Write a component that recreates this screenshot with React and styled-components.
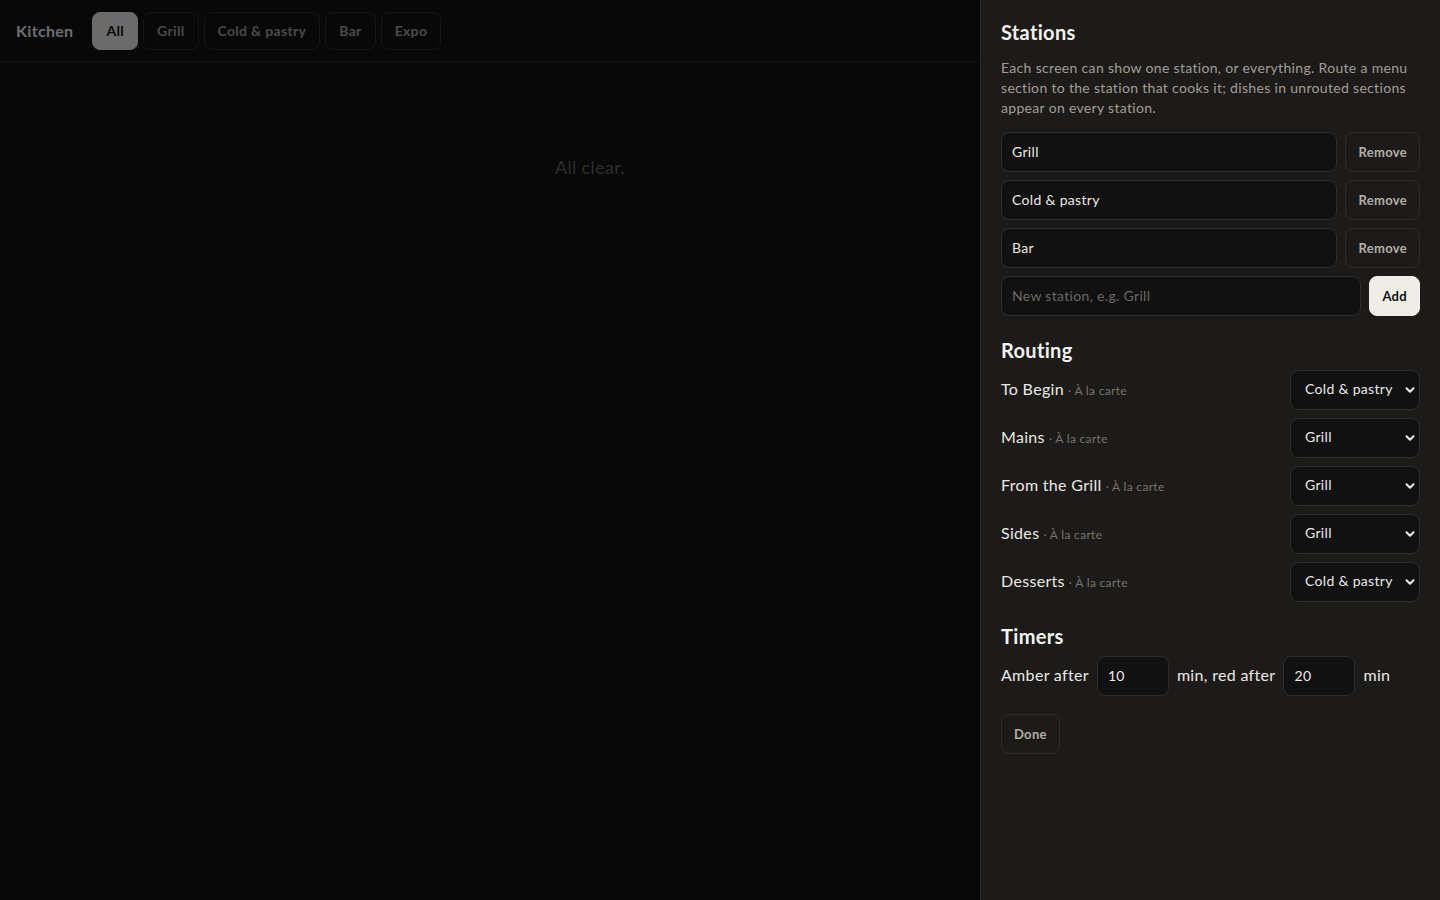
import React from 'react';
import styled, { createGlobalStyle } from 'styled-components';
import { ChevronDown } from 'lucide-react';

const GlobalStyle = createGlobalStyle`
  * { box-sizing: border-box; }
  body {
    margin: 0;
    background: #111;
    font-family: Lato, "Noto Sans", sans-serif;
    letter-spacing: 0.02em;
    color: #ece9e3;
  }
  input, select, button { letter-spacing: inherit; }
`;

// Kitchen board underneath the settings drawer
const Page = styled.div`
  position: relative;
  min-height: 100vh;
  background: #111;
`;

const Header = styled.header`
  display: flex;
  align-items: center;
  gap: 19px;
  height: 62px;
  padding: 0 16px;
  border-bottom: 1px solid #222;
`;

const Brand = styled.div`
  font-size: 16px;
  font-weight: 700;
  color: #dcdcdc;
`;

const Tabs = styled.nav`
  display: flex;
  gap: 5px;
`;

const Tab = styled.button`
  height: 38px;
  padding: 0 13px;
  border-radius: 8px;
  font-family: inherit;
  font-size: 14px;
  font-weight: 700;
  border: 1px solid ${(p) => (p.$active ? '#d6d6d6' : '#2a2a2a')};
  background: ${(p) => (p.$active ? '#d6d6d6' : 'transparent')};
  color: ${(p) => (p.$active ? '#111' : '#949494')};
`;

const Empty = styled.div`
  padding: 94px 260px 0 0;
  text-align: center;
  font-size: 18px;
  color: #5c5c5c;
`;

const Backdrop = styled.div`
  position: fixed;
  inset: 0;
  background: rgba(0, 0, 0, 0.5);
`;

// Settings drawer
const Drawer = styled.aside`
  position: fixed;
  top: 0;
  right: 0;
  bottom: 0;
  width: 460px;
  padding: 20px;
  background: #1c1b19;
  border-left: 1px solid #2b2a27;
  display: flex;
  flex-direction: column;
  gap: 22px;
`;

const Section = styled.section`
  display: flex;
  flex-direction: column;
  gap: 8px;
`;

const Heading = styled.h2`
  margin: 0;
  font-size: 20px;
  line-height: 24px;
  font-weight: 700;
  color: #f5f3ef;
`;

const Intro = styled.p`
  margin: 6px 0 6px;
  font-size: 14px;
  line-height: 20px;
  color: #a29e97;
`;

const Row = styled.div`
  display: flex;
  align-items: center;
  gap: 8px;
`;

const TextInput = styled.input`
  flex: ${(p) => (p.$width ? 'none' : 1)};
  width: ${(p) => (p.$width ? `${p.$width}px` : 'auto')};
  min-width: 0;
  height: 40px;
  padding: 0 10px 2px;
  border-radius: 8px;
  border: 1px solid #2e2c29;
  background: #111;
  color: #ece9e3;
  font-family: inherit;
  font-size: 14px;
  outline: none;

  &::placeholder {
    color: #6c6862;
  }
`;

const Button = styled.button`
  height: 40px;
  padding: 0 12px;
  border-radius: 8px;
  font-family: inherit;
  font-size: 13px;
  font-weight: 700;
  border: 1px solid ${(p) => (p.$primary ? '#efede8' : '#2e2c29')};
  background: ${(p) => (p.$primary ? '#efede8' : 'transparent')};
  color: ${(p) => (p.$primary ? '#111' : '#b3afa8')};
  align-self: ${(p) => (p.$start ? 'flex-start' : 'auto')};
  margin-top: ${(p) => (p.$start ? '10px' : '0')};
`;

const RouteRow = styled.div`
  display: flex;
  align-items: center;
  justify-content: space-between;
`;

const RouteName = styled.div`
  font-size: 16px;
  line-height: 20px;
  padding-bottom: 1px;
  color: #ece9e3;
`;

const RouteMenu = styled.span`
  margin-left: 4px;
  font-size: 12px;
  color: #77736d;
`;

const SelectWrap = styled.div`
  position: relative;
  width: 130px;
`;

const Select = styled.select`
  appearance: none;
  width: 100%;
  height: 40px;
  padding: 0 24px 3px 14px;
  border-radius: 8px;
  border: 1px solid #2e2c29;
  background: #111;
  color: #ece9e3;
  font-family: inherit;
  font-size: 14px;
  outline: none;
`;

const Chevron = styled(ChevronDown)`
  position: absolute;
  right: 3px;
  top: 50%;
  transform: translateY(-50%);
  pointer-events: none;
  color: #ece9e3;
`;

const TimerText = styled.span`
  font-size: 16px;
  line-height: 20px;
  padding-bottom: 3px;
  color: #ece9e3;
`;

const stations = ['Grill', 'Cold & pastry', 'Bar'];

const routes = [
  { name: 'To Begin', station: 'Cold & pastry' },
  { name: 'Mains', station: 'Grill' },
  { name: 'From the Grill', station: 'Grill' },
  { name: 'Sides', station: 'Grill' },
  { name: 'Desserts', station: 'Cold & pastry' },
];

const App = () => {
  return (
    <Page>
      <GlobalStyle />
      <Header>
        <Brand>Kitchen</Brand>
        <Tabs>
          {['All', 'Grill', 'Cold & pastry', 'Bar', 'Expo'].map((t) => (
            <Tab key={t} $active={t === 'All'}>{t}</Tab>
          ))}
        </Tabs>
      </Header>
      <Empty>All clear.</Empty>

      <Backdrop />
      <Drawer>
        <Section>
          <Heading>Stations</Heading>
          <Intro>
            Each screen can show one station, or everything. Route a menu section to the
            station that cooks it; dishes in unrouted sections appear on every station.
          </Intro>
          {stations.map((s) => (
            <Row key={s}>
              <TextInput defaultValue={s} />
              <Button>Remove</Button>
            </Row>
          ))}
          <Row>
            <TextInput placeholder="New station, e.g. Grill" />
            <Button $primary>Add</Button>
          </Row>
        </Section>

        <Section>
          <Heading>Routing</Heading>
          {routes.map((r) => (
            <RouteRow key={r.name}>
              <RouteName>
                {r.name}
                <RouteMenu>· À la carte</RouteMenu>
              </RouteName>
              <SelectWrap>
                <Select defaultValue={r.station}>
                  <option value="">All stations</option>
                  {stations.map((s) => (
                    <option key={s} value={s}>{s}</option>
                  ))}
                </Select>
                <Chevron size={14} strokeWidth={3.5} />
              </SelectWrap>
            </RouteRow>
          ))}
        </Section>

        <Section>
          <Heading>Timers</Heading>
          <Row>
            <TimerText>Amber after</TimerText>
            <TextInput $width={72} defaultValue="10" />
            <TimerText>min, red after</TimerText>
            <TextInput $width={72} defaultValue="20" />
            <TimerText>min</TimerText>
          </Row>
          <Button $start>Done</Button>
        </Section>
      </Drawer>
    </Page>
  );
};

export default App;
